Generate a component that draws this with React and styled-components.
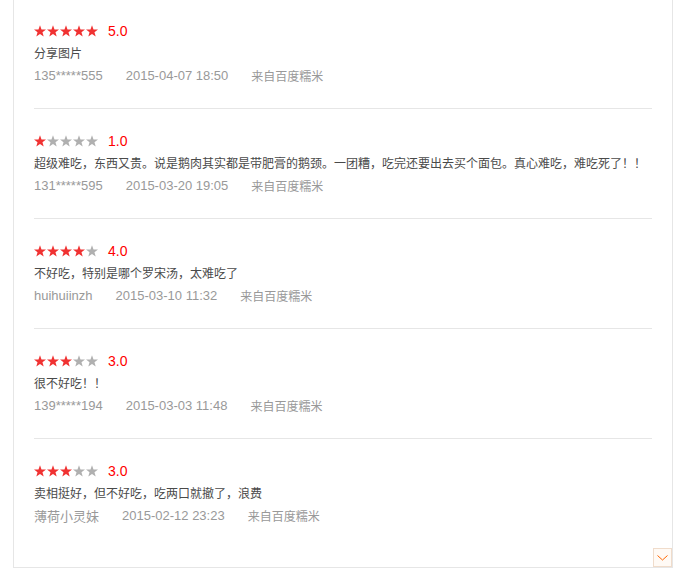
import React from 'react'
import styled, { createGlobalStyle } from 'styled-components'

const reviews = [
  { score: 5, text: '分享图片', user: '135*****555', time: '2015-04-07 18:50' },
  { score: 1, text: '超级难吃，东西又贵。说是鹅肉其实都是带肥膏的鹅颈。一团糟，吃完还要出去买个面包。真心难吃，难吃死了！！', user: '131*****595', time: '2015-03-20 19:05' },
  { score: 4, text: '不好吃，特别是哪个罗宋汤，太难吃了', user: 'huihuiinzh', time: '2015-03-10 11:32' },
  { score: 3, text: '很不好吃！！', user: '139*****194', time: '2015-03-03 11:48' },
  { score: 3, text: '卖相挺好，但不好吃，吃两口就撤了，浪费', user: '薄荷小灵妹', time: '2015-02-12 23:23' }
]

const GlobalStyle = createGlobalStyle`
  html, body {
    margin: 0;
    padding: 0;
    background: #fff;
  }
  body {
    font-family: "Liberation Sans", "Noto Sans CJK SC", sans-serif;
    overflow: hidden;
  }
`

const Star = ({ on }) => (
  <svg width='12' height='12' viewBox='0 0 12 12'>
    <polygon
      fill={on ? '#f03232' : '#b0b0b0'}
      points='6,0.2 7.53,4.4 12,4.55 8.47,7.3 9.7,11.6 6,9.1 2.3,11.6 3.53,7.3 0,4.55 4.47,4.4'
    />
  </svg>
)

export default function App () {
  return (
    <>
      <GlobalStyle />
      <Panel>
        <List>
          {reviews.map((r, i) => (
            <Item key={i}>
              <RatingRow>
                <Stars>
                  {[1, 2, 3, 4, 5].map(n => <Star key={n} on={n <= r.score} />)}
                </Stars>
                <Score>{r.score.toFixed(1)}</Score>
              </RatingRow>
              <Comment>{r.text}</Comment>
              <Meta>
                <MetaText>{r.user}</MetaText>
                <MetaText>{r.time}</MetaText>
                <Source>来自百度糯米</Source>
              </Meta>
            </Item>
          ))}
        </List>
        <Footer>
          <MoreButton>
            <svg width='11' height='6' viewBox='0 0 11 6'>
              <polyline points='0.5,0.5 5.5,5 10.5,0.5' fill='none' stroke='#f60' strokeWidth='1' />
            </svg>
          </MoreButton>
        </Footer>
      </Panel>
    </>
  )
}

const Panel = styled.div`
  width: 658px;
  margin: -2px 0 0 13px;
  border: 1px solid #e6e6e6;
  background: #fff;
`

const List = styled.div`
  padding: 0 20px;
`

const Item = styled.div`
  padding: 21px 0 22px;
  border-bottom: 1px solid #e6e6e6;

  &:last-child {
    border-bottom: none;
  }
`

const RatingRow = styled.div`
  display: flex;
  align-items: center;
  height: 22px;
`

const Stars = styled.div`
  display: flex;
  gap: 1px;
`

const Score = styled.span`
  margin-left: 10px;
  font-size: 14px;
  color: #f00;
`

const Comment = styled.div`
  padding-top: 2px;
  font-size: 12px;
  line-height: 20px;
  color: #4a4a4a;
  white-space: nowrap;
`

const Meta = styled.div`
  display: flex;
  align-items: center;
  height: 22px;
  color: #999;
`

const MetaText = styled.span`
  font-size: 13px;
  margin-right: 23px;
`

const Source = styled.span`
  font-size: 12px;
`

const Footer = styled.div`
  display: flex;
  justify-content: flex-end;
`

const MoreButton = styled.div`
  width: 17px;
  height: 17px;
  border: 1px solid #f0dccb;
  background: #fffaf5;
  display: flex;
  align-items: center;
  justify-content: center;
`
